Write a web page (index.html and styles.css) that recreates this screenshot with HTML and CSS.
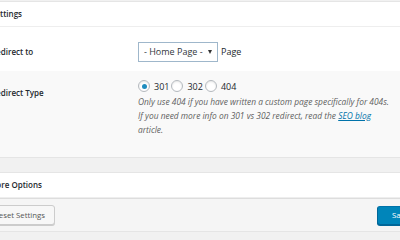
FILE: index.html
```html
<!DOCTYPE html>
<html lang="en">
<head>
  <meta charset="UTF-8" />
  <meta name="viewport" content="width=device-width, initial-scale=1.0" />
  <title>Redirect Settings</title>
  <link rel="stylesheet" href="styles.css">
</head>
<body>
  <div class="wrap">
    <div class="postbox">
      <h2 class="hndle">Settings</h2>
      <div class="form-row">
        <label class="row-label" for="redirect-to">Redirect to</label>
        <div class="row-field inline">
          <span class="select-wrap">
            <select id="redirect-to">
              <option>- Home Page -</option>
            </select>
          </span>
          <span class="after-select">Page</span>
        </div>
      </div>
      <div class="form-row alt">
        <span class="row-label type-label">Redirect Type</span>
        <div class="row-field">
          <div class="radios">
            <label><input type="radio" name="type" checked> 301</label>
            <label><input type="radio" name="type"> 302</label>
            <label><input type="radio" name="type"> 404</label>
          </div>
          <p class="description">Only use 404 if you have written a custom page specifically for 404s.<br>
            If you need more info on 301 vs 302 redirect, read the <a href="#">SEO blog</a> article.</p>
        </div>
      </div>
    </div>

    <div class="postbox second">
      <h2 class="hndle more">More Options</h2>
      <div class="box-footer">
        <button class="button">Reset Settings</button>
        <button class="button primary">Save Changes</button>
      </div>
    </div>
  </div>
</body>
</html>
```

FILE: styles.css
```css
* {
  box-sizing: border-box;
  margin: 0;
  padding: 0;
}

html, body {
  width: 400px;
  height: 240px;
  overflow: hidden;
}

body {
  background: #f1f1f1;
  font-family: 'Open Sans', 'Noto Sans', sans-serif;
  font-size: 9px;
  color: #23282d;
}

.wrap {
  width: 496px;
  margin-left: -26px;
  padding-top: 1px;
}

.postbox {
  background: #fff;
  border: 1px solid #e5e5e5;
}

.postbox.second {
  margin-top: 14px;
}

.hndle {
  font-size: 8px;
  font-weight: 600;
  height: 25px;
  line-height: 24px;
  padding: 0 16px;
  border-bottom: 1px solid #eee;
}

.hndle.more {
  padding-left: 14px;
}

.form-row {
  display: grid;
  grid-template-columns: 163px 1fr;
  align-items: center;
  height: 44px;
  padding-top: 5px;
}

.form-row.alt {
  background: #f9f9f9;
  align-items: start;
  height: auto;
  padding: 8px 0 20px;
}

.row-label {
  padding-left: 16px;
  font-weight: 600;
  font-size: 8px;
  line-height: 12px;
}

.type-label {
  padding-top: 8px;
}

.row-field {
  display: flex;
  flex-direction: column;
  align-items: flex-start;
}

.row-field.inline {
  flex-direction: row;
  align-items: center;
  gap: 3px;
}

.select-wrap {
  position: relative;
  display: inline-block;
  height: 20px;
}

.select-wrap::after {
  content: "";
  position: absolute;
  right: 6px;
  top: 8px;
  border-left: 2.5px solid transparent;
  border-right: 2.5px solid transparent;
  border-top: 4px solid #333;
  pointer-events: none;
}

select {
  appearance: none;
  -webkit-appearance: none;
  font-family: inherit;
  font-size: 9px;
  color: #32373c;
  background: #fff;
  border: 1px solid #9fb7cb;
  height: 20px;
  width: 80px;
  padding: 0 14px 0 5px;
  border-radius: 0;
}

.radios {
  display: flex;
  align-items: center;
  height: 14px;
}

.radios label {
  display: flex;
  align-items: center;
  gap: 4px;
  margin-right: 2px;
}

.radios input {
  appearance: none;
  -webkit-appearance: none;
  width: 12px;
  height: 12px;
  border: 1px solid #b4b9be;
  border-radius: 50%;
  background: #fff;
  box-shadow: inset 0 1px 2px rgba(0, 0, 0, 0.1);
  display: grid;
  place-items: center;
}

.radios input:checked::before {
  content: "";
  width: 5px;
  height: 5px;
  border-radius: 50%;
  background: #1e8cbe;
}

.description {
  margin-top: 2px;
  font-style: italic;
  font-size: 8.4px;
  line-height: 14px;
  color: #5f5f5f;
  width: 252px;
}

.description a {
  color: #0073aa;
}

.box-footer {
  display: flex;
  justify-content: space-between;
  align-items: center;
  background: #f5f5f5;
  border-top: 1px solid #ddd;
  height: 33px;
}

.button {
  font-family: inherit;
  font-size: 7.8px;
  height: 20px;
  padding: 0 9px;
  border: 1px solid #ccc;
  border-radius: 3px;
  background: #f7f7f7;
  color: #555;
  box-shadow: 0 1px 0 #ccc;
}

.button:first-child {
  margin-left: 9px;
}

.button.primary {
  height: 19px;
  background: #0085ba;
  border-color: #0073aa #006799 #006799;
  color: #fff;
  box-shadow: 0 1px 0 #006799;
  margin-right: 12px;
  width: 80px;
}
```
